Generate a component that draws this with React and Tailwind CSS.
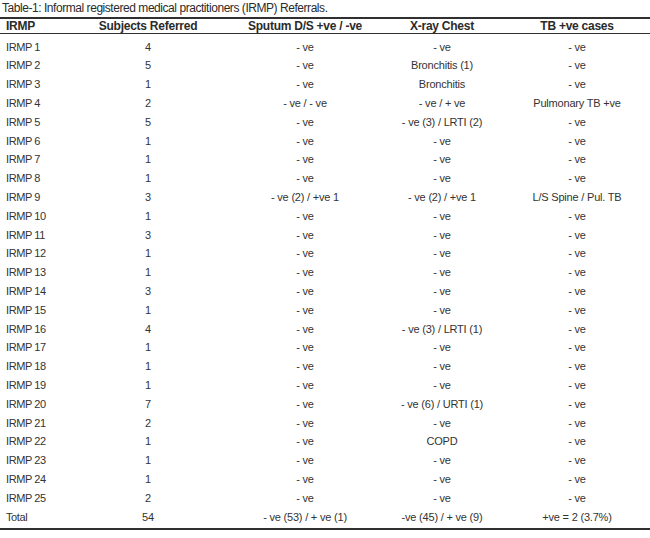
import React from "react";

const rows = [
  ["IRMP 1", "4", "- ve", "- ve", "- ve"],
  ["IRMP 2", "5", "- ve", "Bronchitis (1)", "- ve"],
  ["IRMP 3", "1", "- ve", "Bronchitis", "- ve"],
  ["IRMP 4", "2", "- ve / - ve", "- ve / + ve", "Pulmonary TB +ve"],
  ["IRMP 5", "5", "- ve", "- ve (3) / LRTI (2)", "- ve"],
  ["IRMP 6", "1", "- ve", "- ve", "- ve"],
  ["IRMP 7", "1", "- ve", "- ve", "- ve"],
  ["IRMP 8", "1", "- ve", "- ve", "- ve"],
  ["IRMP 9", "3", "- ve (2) / +ve 1", "- ve (2) / +ve 1", "L/S Spine / Pul. TB"],
  ["IRMP 10", "1", "- ve", "- ve", "- ve"],
  ["IRMP 11", "3", "- ve", "- ve", "- ve"],
  ["IRMP 12", "1", "- ve", "- ve", "- ve"],
  ["IRMP 13", "1", "- ve", "- ve", "- ve"],
  ["IRMP 14", "3", "- ve", "- ve", "- ve"],
  ["IRMP 15", "1", "- ve", "- ve", "- ve"],
  ["IRMP 16", "4", "- ve", "- ve (3) / LRTI (1)", "- ve"],
  ["IRMP 17", "1", "- ve", "- ve", "- ve"],
  ["IRMP 18", "1", "- ve", "- ve", "- ve"],
  ["IRMP 19", "1", "- ve", "- ve", "- ve"],
  ["IRMP 20", "7", "- ve", "- ve (6) / URTI (1)", "- ve"],
  ["IRMP 21", "2", "- ve", "- ve", "- ve"],
  ["IRMP 22", "1", "- ve", "COPD", "- ve"],
  ["IRMP 23", "1", "- ve", "- ve", "- ve"],
  ["IRMP 24", "1", "- ve", "- ve", "- ve"],
  ["IRMP 25", "2", "- ve", "- ve", "- ve"],
  ["Total", "54", "- ve (53) / + ve (1)", "-ve (45) / + ve (9)", "+ve = 2 (3.7%)"],
];

export default function App() {
  return (
    <div className="w-[650px] h-[538px] bg-white text-[#2b2b2b] font-['Liberation_Sans',Arial,sans-serif] overflow-hidden">
      <div className="h-[17px] pl-[2px] text-[12px] leading-[17px] tracking-[-0.45px] whitespace-nowrap">
        Table-1: Informal registered medical practitioners (IRMP) Referrals.
      </div>
      <div className="border-t-2 border-b-2 border-[#303030]">
        <div className="grid grid-cols-[58px_180px_134px_140px_130px] h-[15px] items-center border-b border-[#303030] text-[12px] font-bold leading-[15px] tracking-[-0.25px] whitespace-nowrap">
          <div className="pl-[6px]">IRMP</div>
          <div className="text-center">Subjects Referred</div>
          <div className="text-center">Sputum D/S +ve / -ve</div>
          <div className="text-center">X-ray Chest</div>
          <div className="text-center">TB +ve cases</div>
        </div>
        <div className="pt-[3.6px] pb-[1.6px]">
          {rows.map((r, i) => (
            <div
              key={i}
              className="grid grid-cols-[58px_180px_134px_140px_130px] h-[18.8px] items-center text-[11px] leading-[18.8px] tracking-[-0.2px] whitespace-nowrap text-[#333333]"
            >
              <div className="pl-[6px] tracking-[-0.4px]">{r[0]}</div>
              <div className="text-center">{r[1]}</div>
              <div className="text-center">{r[2]}</div>
              <div className="text-center">{r[3]}</div>
              <div className="text-center">{r[4]}</div>
            </div>
          ))}
        </div>
      </div>
    </div>
  );
}
